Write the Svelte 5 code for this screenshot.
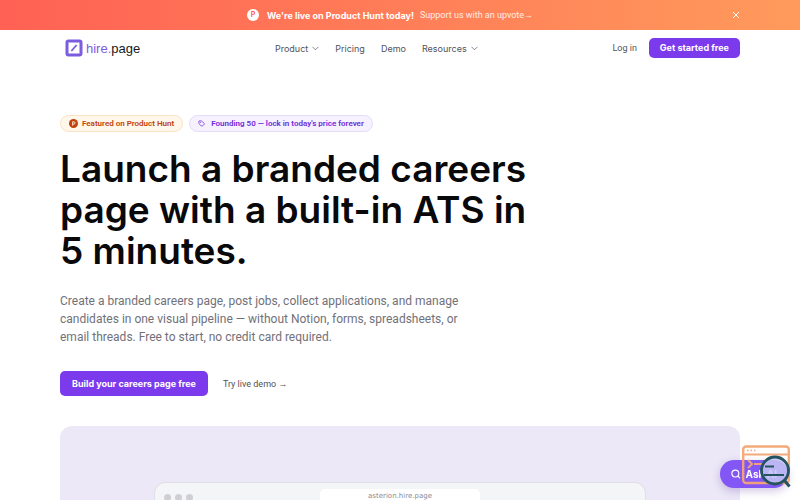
<script>
  let bannerOpen = $state(true);

  const nav = [
    { label: 'Product', menu: true },
    { label: 'Pricing', menu: false },
    { label: 'Demo', menu: false },
    { label: 'Resources', menu: true },
  ];
</script>

<div class="page">
  {#if bannerOpen}
    <div class="banner">
      <div class="banner-text">
        <span class="ph-mark">P</span>
        <strong>We're live on Product Hunt today!</strong>
        <a href="#upvote">Support us with an upvote→</a>
      </div>
      <button class="banner-close" aria-label="Dismiss" onclick={() => (bannerOpen = false)}>
        <svg width="8" height="8" viewBox="0 0 8 8" fill="none" stroke="currentColor" stroke-width="1"><path d="M1 1l6 6M7 1L1 7" /></svg>
      </button>
    </div>
  {/if}

  <header class="header">
    <a class="logo" href="#home">
      <svg width="18" height="18" viewBox="0 0 18 18" fill="none">
        <rect x="2" y="2" width="14" height="14" rx="1.5" stroke="#7c5cdf" stroke-width="3" stroke-linejoin="round" />
        <path d="M6.4 12L11.6 6" stroke="#7c5cdf" stroke-width="1.8" />
      </svg>
      <span><em>hire.</em>page</span>
    </a>
    <nav class="nav">
      {#each nav as item}
        <a href="#{item.label.toLowerCase()}">
          {item.label}
          {#if item.menu}
            <svg width="7" height="5" viewBox="0 0 7 5" fill="none" stroke="currentColor" stroke-width="0.7"><path d="M0.5 0.8l3 3 3-3" /></svg>
          {/if}
        </a>
      {/each}
    </nav>
    <div class="account">
      <a class="plain" href="#login">Log in</a>
      <button class="btn btn-small">Get started free</button>
    </div>
  </header>

  <main>
    <div class="badges">
      <a class="badge orange" href="#product-hunt">
        <svg width="9" height="9" viewBox="0 0 9 9"><circle cx="4.5" cy="4.5" r="4.5" fill="#c2410c" /><path d="M3.6 6.7V2.8h1.3a1.1 1.1 0 0 1 0 2.3H3.6" fill="none" stroke="#fff1e0" stroke-width="0.9" /></svg>
        Featured on Product Hunt
      </a>
      <span class="badge violet">
        <svg width="7" height="7" viewBox="0 0 24 24" fill="none" stroke="currentColor" stroke-width="2.6" stroke-linejoin="round"><path d="M3 4.5V11a3 3 0 0 0 .9 2.1l7.4 7.4a3 3 0 0 0 4.2 0l5-5a3 3 0 0 0 0-4.2l-7.4-7.4A3 3 0 0 0 11 3H4.5A1.5 1.5 0 0 0 3 4.5z" /><circle cx="8" cy="8" r="0.8" /></svg>
        Founding 50 — lock in today's price forever
      </span>
    </div>

    <h1>Launch a branded careers page with a built-in ATS in 5 minutes.</h1>
    <p class="lead">
      Create a branded careers page, post jobs, collect applications, and manage candidates in one
      visual pipeline — without Notion, forms, spreadsheets, or email threads. Free to start, no
      credit card required.
    </p>

    <div class="actions">
      <button class="btn">Build your careers page free</button>
      <a class="plain" href="#demo">Try live demo →</a>
    </div>

    <section class="preview">
      <div class="window">
        <div class="dots"><i></i><i></i><i></i></div>
        <div class="address">asterion.hire.page</div>
      </div>
    </section>
  </main>

  <button class="ask">
    <svg width="10" height="10" viewBox="0 0 10 10" fill="none" stroke="currentColor" stroke-width="1.2" stroke-linecap="round"><circle cx="4.5" cy="4.5" r="3.6" /><path d="M7.2 7.2L9 9" /></svg>
    <span>Ask AI</span>
  </button>

  <svg class="inspector" width="50" height="44" viewBox="0 0 50 44" fill="none">
    <g stroke="#f4a673" stroke-width="2.4" opacity="0.95">
      <rect x="1.2" y="1.5" width="45.6" height="36.5" rx="3" />
      <path d="M1 9.5h46" stroke-width="2" />
      <path d="M6 15l4 4-4 4M12 19h11" stroke-width="2" />
    </g>
    <path d="M5 5.5h1.5M8.5 5.5H10M12 5.5h1.5" stroke="#f4a673" stroke-width="1.5" />
    <circle cx="33" cy="25.5" r="13.5" fill="#c5c6f3" fill-opacity="0.85" stroke="#23545f" stroke-width="2.8" />
    <path d="M23 21.5h9M22 30h20" stroke="#23545f" stroke-width="2" />
    <path d="M42.5 35.5l5 6" stroke="#23545f" stroke-width="3" />
  </svg>
</div>

<style>
  :global(body) {
    margin: 0;
    background: #fff;
  }
  .page {
    height: 100vh;
    overflow: hidden;
    font-family: Inter, sans-serif;
    font-size: 9px;
    color: #52525b;
  }
  a {
    color: inherit;
    text-decoration: none;
  }
  button {
    border: 0;
    font: inherit;
    cursor: pointer;
  }
  .banner {
    display: flex;
    align-items: center;
    gap: 12px;
    height: 30px;
    padding: 0 60px;
    background: linear-gradient(90deg, #ff6154, #ff9a5c);
    color: #fff;
  }
  .banner-text {
    flex: 1;
    display: flex;
    align-items: center;
    justify-content: center;
    gap: 6px;
  }
  .banner-text strong {
    font-weight: 700;
  }
  .banner-text a {
    font-family: Roboto, sans-serif;
    color: #ffece4;
  }
  .ph-mark {
    width: 12px;
    height: 12px;
    margin-right: 2px;
    border-radius: 50%;
    background: #fff;
    color: #ff6154;
    font-size: 7px;
    font-weight: 700;
    line-height: 12px;
    text-align: center;
  }
  .banner-close {
    display: flex;
    padding: 0;
    background: none;
    color: #fff;
  }
  .header {
    display: flex;
    align-items: center;
    justify-content: space-between;
    height: 36px;
    padding: 0 60px;
  }
  .logo {
    display: flex;
    align-items: center;
    gap: 3px;
    padding-left: 5px;
    font-family: "Liberation Sans", Arial, sans-serif;
    font-size: 13px;
    color: #18181b;
  }
  .logo em {
    font-style: normal;
    color: #7c5cdf;
  }
  .nav {
    display: flex;
    gap: 16px;
  }
  .nav a {
    display: flex;
    align-items: center;
    gap: 4px;
  }
  .plain {
    font-family: Roboto, sans-serif;
  }
  .account {
    display: flex;
    align-items: center;
    gap: 12px;
  }
  .btn {
    padding: 0 12px;
    border-radius: 5px;
    background: #7c3aed;
    color: #fff;
    font-weight: 700;
    line-height: 25px;
  }
  .btn-small {
    padding: 0 11px;
    line-height: 20px;
  }
  main {
    padding: 49px 60px 0;
  }
  .badges {
    display: flex;
    gap: 6px;
  }
  .badge {
    display: flex;
    align-items: center;
    height: 15px;
    padding: 0 8px;
    border: 1px solid;
    border-radius: 9px;
    font-family: Roboto, sans-serif;
    font-size: 8px;
    font-weight: 600;
  }
  .orange {
    gap: 4px;
    border-color: #fae3c4;
    background: #fef7ea;
    color: #c2410c;
  }
  .violet {
    gap: 6px;
    border-color: #e4dcfa;
    background: #f5f1fe;
    color: #6d28d9;
  }
  h1 {
    max-width: 490px;
    margin: 16px 0 0;
    font-size: 37px;
    font-weight: 600;
    line-height: 41px;
    color: #09090b;
  }
  .lead {
    max-width: 415px;
    margin: 21px 0 0;
    font-family: Roboto, sans-serif;
    font-size: 12px;
    line-height: 18px;
    color: #71717a;
  }
  .actions {
    display: flex;
    align-items: center;
    gap: 15px;
    margin-top: 25px;
  }
  .preview {
    display: flex;
    justify-content: center;
    height: 300px;
    margin-top: 30px;
    border-radius: 12px;
    background: #ece8f7;
  }
  .window {
    display: grid;
    grid-template-columns: 1fr 160px 1fr;
    align-items: start;
    width: 72%;
    margin-top: 56px;
    border: 1px solid #dedde8;
    border-radius: 11px 11px 0 0;
    background: #f4f5f7;
  }
  .dots {
    display: flex;
    gap: 4px;
    padding: 11px 9px;
  }
  .dots i {
    width: 7px;
    height: 7px;
    border-radius: 50%;
    background: #cfced4;
  }
  .address {
    margin-top: 6px;
    border-radius: 5px;
    background: #fff;
    color: #8b8b93;
    font-family: "DejaVu Sans", sans-serif;
    font-size: 7px;
    line-height: 15px;
    text-align: center;
  }
  .ask {
    position: fixed;
    right: 12px;
    bottom: 12px;
    display: flex;
    align-items: center;
    gap: 5px;
    height: 28px;
    width: 68px;
    padding: 0 11px;
    border-radius: 14px;
    background: #8257f5;
    box-shadow: 0 3px 8px rgba(76, 29, 149, 0.25);
    color: #fff;
    font-size: 10px;
    font-weight: 700;
    white-space: nowrap;
  }
  .inspector {
    position: fixed;
    right: 8px;
    bottom: 11px;
  }
</style>
